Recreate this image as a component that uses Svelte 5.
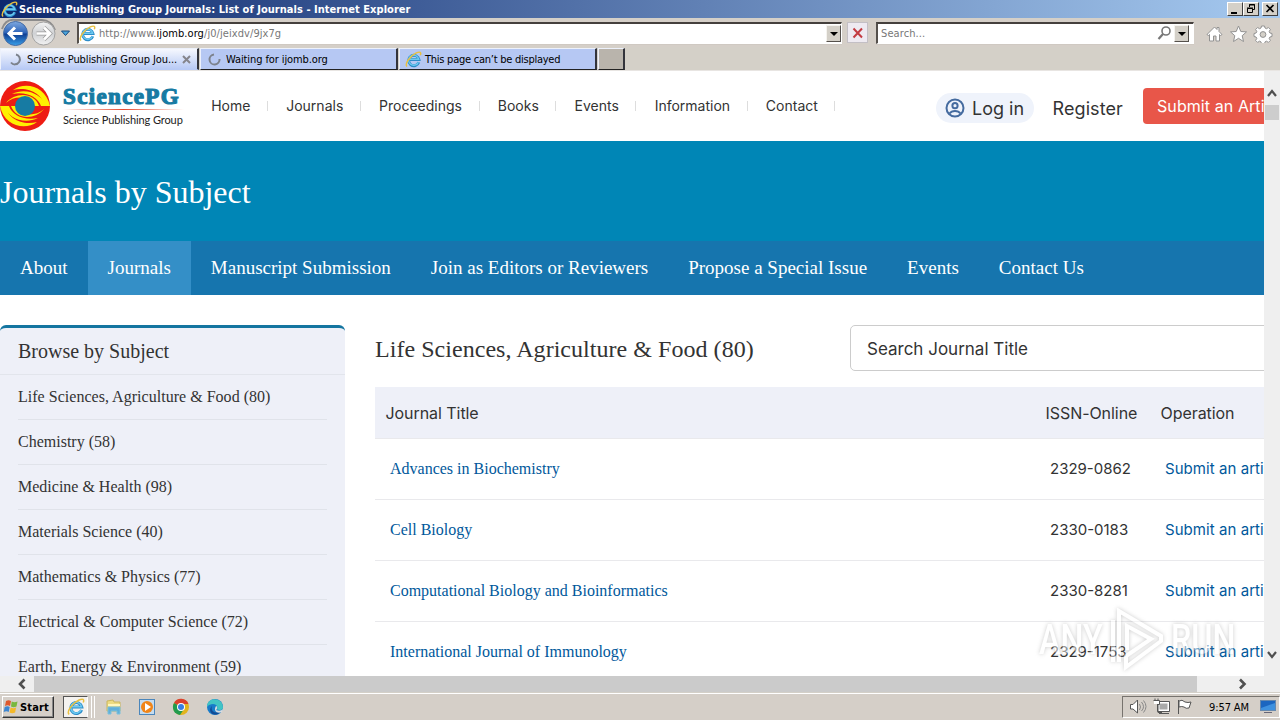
<script>
  const menu = ['Home', 'Journals', 'Proceedings', 'Books', 'Events', 'Information', 'Contact'];
  const sections = ['About', 'Journals', 'Manuscript Submission', 'Join as Editors or Reviewers', 'Propose a Special Issue', 'Events', 'Contact Us'];
  const subjects = [
    'Life Sciences, Agriculture & Food (80)', 'Chemistry (58)', 'Medicine & Health (98)',
    'Materials Science (40)', 'Mathematics & Physics (77)', 'Electrical & Computer Science (72)',
    'Earth, Energy & Environment (59)'
  ];
  const journals = [
    ['Advances in Biochemistry', '2329-0862'],
    ['Cell Biology', '2330-0183'],
    ['Computational Biology and Bioinformatics', '2330-8281'],
    ['International Journal of Immunology', '2329-1753']
  ];
</script>

{#snippet ie(size)}
  <svg width={size} height={size} viewBox="0 0 18 18">
    <path d="M14.6 11.9A5.500 5.500 0 1 1 14.800 9H5.2" fill="none" stroke="#2c8cc9" stroke-width="3" />
    <path d="M14.2 11.8A5.4 5.4 0 1 1 14.5 8.7H5" fill="none" stroke="#6cc9f0" stroke-width="1.5" />
    <path d="M2.2 16.4C-.8 14 5 5.300 12 2c4-1.800 5.500-.5 4.200 2.500" fill="none" stroke="#e9c040" stroke-width="1.500" />
  </svg>
{/snippet}

{#snippet swirl()}
  <path d="M0 25a25 25 0 0 1 50 0z" fill="#ee1c13" />
  <path d="M13 9C25 0 46 5 50 25H44C43 13 28 5 13 9z" fill="#fff000" />
  <path d="M12 13C26 6 42 13 46 25H41C38 16 26 10 12 13z" fill="#fff000" />
  <path d="M6 22C15 11 34 11 39 25H33C30 16 16 13 6 22z" fill="#fff000" />
{/snippet}

<div class="desktop">
  <header class="title">
    {@render ie(17)}
    <b>Science Publishing Group Journals: List of Journals - Internet Explorer</b>
    <div class="winbtns">
      <i><svg width="14" height="12"><path d="M3 9h6v2H3z" /></svg></i>
      <i><svg width="14" height="12" fill="none" stroke="#000"><path d="M5.500 4V1.500h5v5H8M5 2h6M3.500 5.500h5v4h-5zM3 5h6" /></svg></i>
      <i class="x"><svg width="14" height="12" stroke="#000" stroke-width="1.700"><path d="M3.500 2l7 7M10.500 2l-7 7" /></svg></i>
    </div>
  </header>

  <div class="toolbar">
    <svg class="nav" width="74" height="29" viewBox="0 0 74 29">
      <defs>
        <linearGradient id="bl" x2="0" y2="1"><stop stop-color="#7fa9e0" /><stop offset=".48" stop-color="#2b62b8" /><stop offset=".52" stop-color="#0e3d91" /><stop offset="1" stop-color="#3aa0ea" /></linearGradient>
        <linearGradient id="gr" x2="0" y2="1"><stop stop-color="#f4f4f4" /><stop offset=".5" stop-color="#cfd1d4" /><stop offset="1" stop-color="#f2f2f2" /></linearGradient>
      </defs>
      <path d="M2 11C5 2 11 1 16 2h26c6 0 11 4 13 10" fill="none" stroke="#8d8c8c" stroke-width="2" />
      <circle cx="15.500" cy="15.500" r="12" fill="url(#bl)" stroke="#456ca5" />
      <circle cx="43.500" cy="15.500" r="11.500" fill="url(#gr)" stroke="#a2a2a2" />
      <path d="M22.500 15.500H9M15 9.500l-6 6 6 6" fill="none" stroke="#fff" stroke-width="3" />
      <path d="M36.500 15.500H50M44 9.500l6 6-6 6" fill="none" stroke="#9a9a9a" stroke-width="4" />
      <path d="M36.500 15.500H50M44 9.500l6 6-6 6" fill="none" stroke="#fff" stroke-width="2.700" />
      <path d="M61.500 13h8l-4 4.500z" fill="#4ba5dc" stroke="#19497c" />
    </svg>
    <div class="field address">
      {@render ie(17)}
      <span class="url">http://www.<em>ijomb.org</em>/j0/jeixdv/9jx7g</span>
      <i class="drop"></i>
    </div>
    <div class="stop"><svg width="12" height="12"><path d="M1.500 1.500l8.500 9M10 1.500l-8.500 9" stroke="#c33c42" stroke-width="2" /></svg></div>
    <div class="field find">
      <span>Search...</span>
      <svg width="15" height="15" fill="none" stroke="#777"><circle cx="9" cy="5" r="4" stroke-width="1.600" /><path d="M6 8l-4.500 5" stroke-width="2.200" /></svg>
      <i class="drop"></i>
    </div>
    <svg class="tools" width="68" height="18" viewBox="0 0 68 18" fill="#fff" stroke="#929292" stroke-width="1">
      <path d="M1 9.500L8.500 2l2.500 2.500V2.500h2v4L16 9.500l-1.500 1-1-1V16h-3.500v-5H7.500v5H3.500V9.500l-1 1z" />
      <path d="M32.500 1l2.300 5.500 5.700.4-4.300 3.800 1.300 5.800-5-3.200-5 3.200 1.300-5.800L24.500 6.900l5.700-.4z" />
      <path d="M55.500 1h3l.5 2 1.500.700 1.900-1.200 2 2-1.200 1.900.7 1.600 2.100.500v3l-2.100.500-.7 1.500 1.200 1.900-2 2-1.900-1.200-1.500.700-.5 2.100h-3l-.5-2.100-1.500-.7-1.900 1.200-2-2 1.200-1.900-.7-1.500-2.100-.5v-3l2.100-.5.7-1.600-1.200-1.900 2-2L53.500 3.700l1.500-.7z" />
      <circle cx="57" cy="9.500" r="2.900" fill="#d4d0c8" />
    </svg>
  </div>

  <div class="tabs">
    <div class="tab active">
      <svg width="13" height="13"><path d="M7 1.500A5 5 0 1 1 2 9.500" fill="none" stroke="#7c828c" stroke-width="2" /></svg>
      <span>Science Publishing Group Jou...</span>
      <svg class="close" width="9" height="9"><path d="M1 1l7 7M8 1L1 8" stroke="#85858c" stroke-width="2" /></svg>
    </div>
    <div class="tab">
      <svg width="13" height="13"><path d="M6 1.500A5 5 0 1 0 11.500 6" fill="none" stroke="#7c828c" stroke-width="2" /></svg>
      <span class="t2">Waiting for ijomb.org</span>
    </div>
    <div class="tab third">{@render ie(17)}<span class="t3">This page can’t be displayed</span></div>
    <div class="tab new"></div>
  </div>

  <div class="view">
    <main class="page">
      <div class="site">
        <svg class="logo" width="50" height="50" viewBox="0 0 50 50">
          {@render swirl()}
          <g transform="rotate(180 25 25)">{@render swirl()}</g>
          <circle cx="25" cy="25" r="10" fill="#177ba3" />
        </svg>
        <div class="brand"><strong>SciencePG</strong><hr /><span>Science Publishing Group</span></div>
        <nav class="menu">{#each menu as m}<a>{m}</a>{/each}</nav>
        <div class="login">
          <svg width="20" height="20" fill="none" stroke="#456b9f" stroke-width="2"><circle cx="10" cy="10" r="8.500" /><circle cx="10" cy="7.700" r="2.600" /><path d="M4.500 15.500c2.500-3.500 8.500-3.500 11 0" /></svg>
          <span>Log in</span>
        </div>
        <span class="register">Register</span>
        <div class="submit">Submit an Article</div>
      </div>
      <div class="hero"><h1>Journals by Subject</h1></div>
      <nav class="sections">{#each sections as s, i}<a class:on={i === 1}>{s}</a>{/each}</nav>
      <div class="body">
        <aside>
          <h2>Browse by Subject</h2>
          <ul>{#each subjects as s}<li>{s}</li>{/each}</ul>
        </aside>
        <section>
          <div class="head"><h2>Life Sciences, Agriculture &amp; Food (80)</h2><div class="search">Search Journal Title</div></div>
          <div class="row th"><span>Journal Title</span><span>ISSN-Online</span><span>Operation</span></div>
          {#each journals as [name, issn]}
            <div class="row"><a class="name">{name}</a><span>{issn}</span><a class="op">Submit an article</a></div>
          {/each}
        </section>
      </div>
    </main>
    <div class="vbar">
      <svg width="16" height="34"><path d="M4 25l4-5 4 5" fill="none" stroke="#505050" stroke-width="2.200" /></svg>
      <i></i>
      <svg class="down" width="16" height="16"><path d="M4 5l4 5 4-5" fill="none" stroke="#505050" stroke-width="2.200" /></svg>
    </div>
  </div>
  <div class="hbar">
    <svg width="34" height="16"><path d="M24.500 3.500L20 8l4.500 4.500" fill="none" stroke="#505050" stroke-width="2.600" /></svg>
    <i></i>
    <svg width="83" height="16"><path d="M43 3.500L47.500 8 43 12.500" fill="none" stroke="#505050" stroke-width="2.600" /></svg>
  </div>

  <footer class="taskbar">
    <div class="start">
      <svg width="16" height="16" viewBox="0 0 16 16"><path d="M3 2c2-1.300 3.500-1 5 0L7 7C5.500 6 4 6 2 7z" fill="#df582c" /><path d="M8.700 2.500c2 1 3.500 1 5.800 0l-1 5c-2 1-4 1-5.500 0z" fill="#79b83f" /><path d="M1.700 8c2-1 3.500-1 5 0l-1 5c-1.500-1-3-1-5 0z" fill="#3d86d1" /><path d="M7.600 8.500c2 1 3.500 1 5.500 0l-1 5c-2 1-4 1-5.500 0z" fill="#f4b92a" /></svg>
      <b>Start</b>
    </div>
    <div class="running"><div>{@render ie(18)}</div><i></i></div>
    <svg class="apps" width="124" height="20" viewBox="0 0 124 20">
      <g><path d="M4 4l6-1 1 2h6v9H4z" fill="#eddb82" stroke="#cab65d" /><path d="M5 7h12v2H5z" fill="#fff6bd" /><path d="M5 10h12v7h-3v-3H8v3H5z" fill="#60afda" stroke="#7ac0dc" /></g>
      <rect x="36.500" y="2.500" width="15" height="15" fill="#c5dcef" stroke="#4b86bb" /><circle cx="44" cy="10" r="6" fill="#f18518" /><path d="M42 6l6 4-6 4z" fill="#fff" />
      <g><circle cx="78" cy="10" r="8" fill="#e2b41d" /><path d="M78 10L71 6a8 8 0 0 1 14.500 1H78z" fill="#db402e" /><path d="M71 6a8 8 0 0 0 6 12l4-6-3-2z" fill="#229b4e" /><circle cx="78" cy="10" r="4" fill="#fff" /><circle cx="78" cy="10" r="3" fill="#397ee2" /></g>
      <g><circle cx="112" cy="10" r="8" fill="#187bc9" /><path d="M104 10c0-11 16-10 16 .5 0 3-5 3.500-6 1.500 2-5-6-7-10-2z" fill="#42c4c4" /><path d="M109 9c-2 6 4 8 9 5-5 8-15 1-9-5z" fill="#124b95" /><path d="M113 9c2 0 1 4 0 4 3 1 5 1 7-1l-1 3c-5 2-9-1-6-6z" fill="#d6dce0" /></g>
    </svg>
    <div class="tray">
      <svg width="66" height="18" viewBox="0 0 66 18" fill="#fff" stroke="#555">
        <path d="M1.500 6.500H4L8.500 2v13L4 11H1.500z" /><path d="M10.500 6q2 3 0 6M12.500 4q4 5 0 9M14.500 2.500q5 6 0 12" fill="none" stroke="#888" />
        <path d="M29.500 4.500h10v8h-10z" fill="#a9a9a9" stroke="#fff" stroke-width="2" /><path d="M28.500 3.500h12v10h-12zM30 15.500h10" fill="none" /><path d="M24.500 2.500h6v4h-1.500v8h4M26 3V.500M29 3V.500" fill="none" /><path d="M25 3h5v3h-5z" stroke="none" />
        <path d="M49.500 2v14" /><path d="M50 3q3-2 6 1 3 1 6 0l-2 6q-3 1-5-1-2-1-5 0z" />
      </svg>
      <span>9:57 AM</span>
      <svg class="mon" width="16" height="14"><rect x=".5" y=".5" width="15" height="10" fill="#1b66c0" stroke="#6689ae" /><path d="M1 8L15 3v7H1z" fill="#3e91df" /><path d="M4 12h8v1H4z" fill="#667" /></svg>
    </div>
  </footer>

  <div class="mark">
    <span>ANY</span>
    <svg width="56" height="64" viewBox="0 0 56 64"><path d="M3 12v42M9 54V3l42 25v5L16 59V48l25-17L17 18v24" /></svg>
    <span>RUN</span>
  </div>
</div>

<style>
  :global(body) { overflow: hidden; }
  * { box-sizing: border-box; }
  svg { flex: none; display: block; }
  i { font-style: normal; display: block; }
  .desktop { width: 1280px; height: 720px; overflow: hidden; position: relative; display: flex; flex-direction: column; background: #d4d0c8; font: 11px "DejaVu Sans Condensed", "DejaVu Sans", sans-serif; font-stretch: condensed; color: #000; }
  .title { height: 18px; flex: none; display: flex; align-items: center; padding: 0 2px 0 1px; background: linear-gradient(90deg, #0d286d, #a6caf0); color: #fff; gap: 1px; }
  .title b { flex: 1; white-space: nowrap; font-size: 11px; letter-spacing: .035px; }
  .winbtns { display: flex; }
  .winbtns i { width: 16px; height: 14px; background: #d4d0c8; border: 1px solid; border-color: #fff #404040 #404040 #fff; }
  .winbtns .x { margin-left: 3px; }
  .toolbar { height: 29px; flex: none; display: flex; background: #d5cfc8; border-top: 1px solid #d4d0c8; }
  .nav { margin: -1px 3px 0 0; }
  .field { height: 22px; margin-top: 3px; display: flex; align-items: center; background: #fff; border: 1px solid #fff; border-top: 2px solid #45403d; border-left: 2px solid #55504c; box-shadow: 0 1px #cfc9c2; color: #777; }
  .address { width: 765px; padding-left: 0; }
  .url { flex: 1; margin-left: 3px; letter-spacing: .07px; }
  .url em { font-style: normal; color: #000; }
  .drop { width: 15px; height: 17px; background: #d4d0c8; border: 1px solid; border-color: #f5f3ef #55504c #55504c #f5f3ef; padding: 6px 0 0 3px; }
  .drop::after { content: ''; display: block; border: 4px solid transparent; border-top-color: #000; border-bottom: 0; width: 0; }
  .stop { width: 21px; height: 21px; margin: 3px 8px 0 5px; border: 1px solid #c3bfc5; background: #eeeaf1; display: grid; place-items: center; }
  .find { width: 318px; padding: 0 4px 0 3px; }
  .find span { flex: 1; letter-spacing: .1px; }
  .find svg { margin-right: 2px; }
  .find svg { margin-left: -2px; }
  .tools { margin: 6px 0 0 12px; }
  .tabs { height: 24px; flex: none; display: flex; gap: 1px; padding-top: 1px; border-bottom: 1px solid #e8e5e2; }
  .tab { height: 22px; width: 198px; background: #b6c8f3; border: 1px solid #edf1fb; border-right: 2px solid #33343b; border-bottom: 1px solid #222; display: flex; align-items: center; padding-left: 7px; white-space: nowrap; }
  .tab:first-child { padding-left: 8px; background: linear-gradient(#f6f8fe, #b8caf5); border-bottom-color: #b8caf5; width: 199px; }
  .tab span { margin-left: 5px; letter-spacing: -.25px; padding-top: 1px; }
  .tab.active span { letter-spacing: -.1px; }
  .close { margin-left: 5px; }
  .tab.third { padding-left: 5px; }
  .tab .t2 { letter-spacing: -.1px; }
  .tab .t3 { margin-left: 3px; }
  .tab.new { width: 27px; background: #b9b4ac; }
  .view { height: 605px; flex: none; display: flex; }
  .page { width: 1264px; overflow: hidden; background: #fff; color: #333; font-family: Inter, sans-serif; }
  .site { height: 70px; width: 1400px; display: flex; align-items: flex-start; padding-top: 9px; }
  .logo { margin: 1px 1px 0 0; }
  .brand { width: 121px; margin-left: 12px; }
  .brand strong { display: block; height: 29px; font: bold 23px/33px "Liberation Serif", serif; color: #177ba3; -webkit-text-stroke: 1.2px #177ba3; letter-spacing: 1.35px; }
  .brand hr { height: 1px; border: 0; margin: 0; background: linear-gradient(90deg, #fff, #e64a2e, #fff); }
  .brand span { display: block; font: 11px/20px Lato, sans-serif; letter-spacing: -.1px; color: #222; white-space: nowrap; }
  .menu { display: flex; align-items: center; margin: 21px 0 0 9px; width: 643px; }
  .menu a { font-size: 14px; line-height: 10px; padding: 0 16.600px 0 18.200px; border-right: 1px solid #ddd; }
  .login { margin: 13px 0 0 100px; width: 98px; height: 30px; border-radius: 15px; background: #eff3fb; display: flex; align-items: center; gap: 7px; padding-left: 9px; font-size: 18px; }
  .register { font-size: 18px; line-height: 32px; margin: 13px 0 0 18.500px; width: 90.500px; letter-spacing: .1px; }
  .submit { margin-top: 8px; width: 180px; height: 36px; border-radius: 4px; background: #e85649; color: #fff; font-size: 16px; line-height: 36px; padding-left: 14px; letter-spacing: .08px; }
  .hero { height: 100px; background: #0086b6; }
  h1, h2 { margin: 0; font-weight: 400; font-family: "Liberation Serif", serif; }
  h1 { color: #fff; font-size: 32px; line-height: 102px; }
  .sections { height: 54px; display: flex; background: #1675ae; font: 19px/54px "Liberation Serif", serif; color: #fff; }
  .sections a { padding: 0 20px; white-space: nowrap; }
  .sections .on { background: #348fc7; }
  .body { display: flex; padding-top: 30px; gap: 30px; width: 1400px; }
  aside { width: 345px; height: 500px; flex: none; background: #eef0f8; border-top: 3px solid #1475a0; border-radius: 6px 6px 0 0; }
  aside h2 { height: 47px; font-size: 20px; line-height: 46px; padding-left: 18px; border-bottom: 1px solid #e2e5ec; }
  ul { margin: 0; padding: 0 18px; list-style: none; }
  li { height: 45px; font: 16px/44px "Liberation Serif", serif; border-bottom: 1px solid #e0e3ea; }
  li:first-child { letter-spacing: .025px; }
  section { width: 1000px; }
  .head { height: 62px; display: flex; }
  .head h2 { width: 475px; font-size: 24px; line-height: 49px; white-space: nowrap; letter-spacing: .04px; }
  .search { width: 500px; height: 46px; border: 1px solid #ccc; border-radius: 5px; font-size: 17px; line-height: 46px; padding-left: 16px; }
  .row { height: 61px; border-bottom: 1px solid #e9e9ec; display: grid; grid-template-columns: 660px 115px 200px; padding-left: 15px; font-size: 15px; line-height: 60px; }
  .th { height: 52px; padding-left: 10.500px; background: #eef0f8; font-size: 16px; line-height: 53px; letter-spacing: -.06px; }
  .name { font: 16px/60px "Liberation Serif", serif; }
  .row a { color: #00589b; }
  .row .op { letter-spacing: .06px; }
  .vbar { width: 16px; background: #efefef; display: flex; flex-direction: column; }
  .vbar i { width: 14px; height: 15px; margin-left: 1px; background: #cdcdcd; }
  .vbar .down { margin-top: auto; margin-bottom: 13px; }
  .hbar { height: 16px; flex: none; display: flex; background: #efefef; }
  .hbar i { width: 1163px; background: #cbcbcb; }
  .taskbar { flex: 1; display: flex; border-top: 1px solid #d4d0c8; box-shadow: inset 0 1px #fff; padding-top: 3px; background: #d5cfc8; }
  .start { width: 52px; height: 22px; margin-left: 2px; border: 1px solid; border-color: #fff #333 #333 #fff; box-shadow: inset -1px -1px #888; display: flex; align-items: center; }
  .start b { font-size: 11px; letter-spacing: .15px; margin-left: 1px; }
  .running { margin-left: 9px; display: flex; gap: 3px; height: 22px; }
  .running div { width: 25px; background: #f4f2ef; border: 1px solid #555; border-right-color: #fff; padding: 1px 3px; }
  .running i { width: 4px; border: 1px solid #fff; border-width: 0 1px; }
  .apps { margin: 1px 0 0 8px; }
  .tray { margin-left: auto; width: 158px; height: 22px; border: 1px solid; border-color: #77736e #fff #fff #77736e; display: flex; align-items: center; padding-left: 6px; }
  .tray span { margin-left: 14px; white-space: nowrap; letter-spacing: -.1px; width: 50px; }
  .mon { margin-left: 1px; }
  .mark { position: absolute; left: 1039px; top: 608px; display: flex; align-items: center; gap: 5px; opacity: .5; filter: drop-shadow(0 0 2px #999); color: #fff; font: 500 42px/64px Roboto, sans-serif; pointer-events: none; }
  .mark span { display: inline-block; width: 66px; transform: scaleX(.77); transform-origin: 0 50%; }
  .mark svg { fill: none; stroke: #fff; stroke-width: 4; }
</style>
